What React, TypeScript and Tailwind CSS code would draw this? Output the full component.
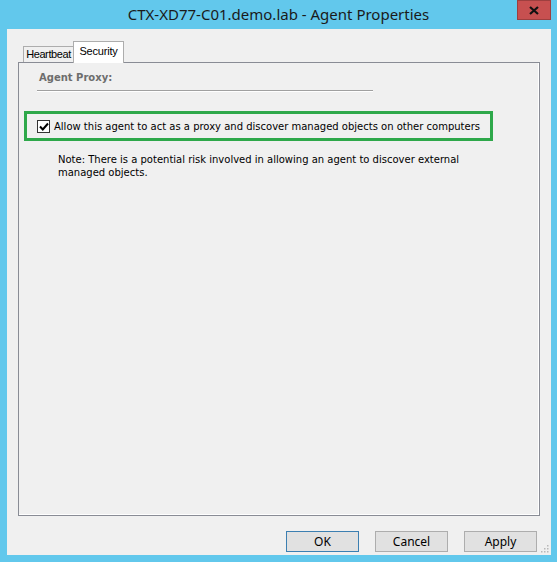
import React from 'react';

/**
 * Agent Properties dialog — Security tab with the agent proxy option.
 */

const seg = { fontFamily: '"Noto Sans", "Open Sans", sans-serif' };
const lib = { fontFamily: '"Liberation Sans", Arial, sans-serif' };
const tah = { fontFamily: '"DejaVu Sans", Verdana, sans-serif' };

const DialogButton: React.FC<{ label: string; primary?: boolean }> = ({ label, primary }) => (
  <button
    className={
      primary
        ? 'w-[73px] h-[21px] bg-[#e1e1e1] border border-[#3c7fb1] text-[12px] text-black leading-none'
        : 'w-[73px] h-[21px] bg-[#e1e1e1] border border-[#adadad] text-[12px] text-black leading-none'
    }
    style={seg}
  >
    {label}
  </button>
);

export default function App() {
  return (
    <div className="w-[557px] h-[562px] bg-[#62c8ec] flex flex-col overflow-hidden">
      {/* Title bar */}
      <div className="h-[29px] flex items-start shrink-0">
        <div className="flex-1 h-[29px] flex items-center justify-center pl-[40px] text-[15px] text-[#1a1a1a]" style={seg}>
          CTX-XD77-C01.demo.lab - Agent Properties
        </div>
        <div className="w-[34px] h-[20px] mr-[6px] bg-[#c75050] border border-[#9d3f3f] flex items-center justify-center">
          <svg width="10" height="9" viewBox="0 0 10 9">
            <path d="M1 1 L9 8 M9 1 L1 8" stroke="#111" strokeWidth="2.2" />
          </svg>
        </div>
      </div>

      {/* Client area */}
      <div className="mx-[7px] w-[544px] h-[526px] bg-[#f0f0f0] flex flex-col px-[11px] pt-[12px] relative">
        {/* Tabs */}
        <div className="flex items-end h-[21px] pl-[5px]">
          <div className="w-[51px] h-[16px] border border-b-0 border-[#adadad] bg-[#f0f0f0] text-[11px] tracking-[-0.4px] text-black flex items-center justify-center whitespace-nowrap" style={lib}>
            Heartbeat
          </div>
          <div className="w-[51px] h-[22px] -mb-px -ml-px relative z-10 pb-[3px] border border-b-0 border-[#adadad] bg-white text-[11px] tracking-[-0.2px] text-black flex items-center justify-center whitespace-nowrap" style={lib}>
            Security
          </div>
        </div>

        {/* Panel */}
        <div className="w-[522px] h-[454px] border border-[#898c95] bg-[#f0f0f0] flex flex-col">
          <div className="flex-1 border-r border-b border-white flex flex-col">
            <div className="pl-[20px] pt-[7px]">
              <div className="text-[10px] font-bold text-[#6d6d6d]" style={tah}>
                Agent Proxy:
              </div>
              <div className="w-[336px] h-px bg-[#a0a0a0] mt-[5px] ml-[-2px] border-b border-white box-content" />
            </div>

            <div className="mt-[19px] ml-[5px] w-[469px] h-[30px] border-[3px] border-[#2ea84a] flex items-center pl-[10px]">
              <div className="w-[13px] h-[13px] border border-[#333] bg-white flex items-center justify-center">
                <svg width="10" height="9" viewBox="0 0 10 9">
                  <path d="M1 4.5 L3.8 7.5 L9 1.5" stroke="#000" strokeWidth="2" fill="none" />
                </svg>
              </div>
              <span className="ml-[4px] text-[10px] text-black whitespace-nowrap" style={tah}>
                Allow this agent to act as a proxy and discover managed objects on other computers
              </span>
            </div>

            <div className="mt-[12px] ml-[39px] w-[412px] text-[10px] leading-[13px] text-black" style={tah}>
              Note: There is a potential risk involved in allowing an agent to discover external managed objects.
            </div>
          </div>
        </div>

        {/* Buttons */}
        <div className="flex justify-end gap-[16px] mt-[15px] pr-[3px]">
          <DialogButton label="OK" primary />
          <DialogButton label="Cancel" />
          <DialogButton label="Apply" />
        </div>

        {/* Resize grip */}
        <svg className="absolute right-[2px] bottom-[2px]" width="9" height="9" viewBox="0 0 9 9">
          {[
            [7, 1], [7, 4], [4, 4], [7, 7], [4, 7], [1, 7],
          ].map(([x, y], i) => (
            <rect key={i} x={x} y={y} width="1.5" height="1.5" fill="#b8b8b8" />
          ))}
        </svg>
      </div>
    </div>
  );
}
